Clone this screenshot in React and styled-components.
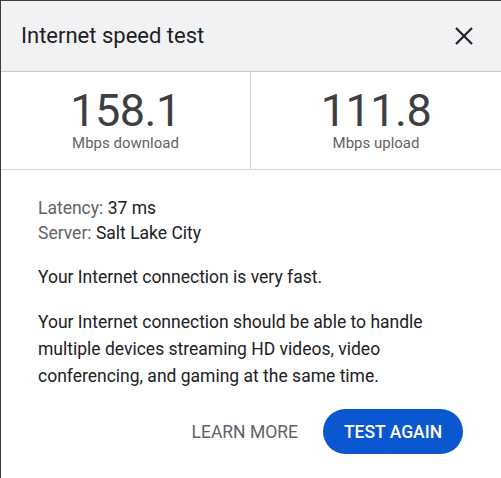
import React from "react";
import styled, { createGlobalStyle } from "styled-components";

const GlobalStyle = createGlobalStyle`
  html, body {
    margin: 0;
    padding: 0;
    background: #ffffff;
  }
  body {
    font-family: Roboto, "Liberation Sans", Arial, sans-serif;
  }
`;

const Dialog = styled.div`
  width: 500px;
  height: 477px;
  border-top: 1px solid #3c3c3c;
  border-left: 1px solid #3c3c3c;
  background: #ffffff;
  display: flex;
  flex-direction: column;
`;

const Header = styled.header`
  height: 71px;
  box-sizing: border-box;
  background: #f1f2f4;
  border-bottom: 1px solid #c9c9c9;
  display: flex;
  align-items: center;
  justify-content: space-between;
  padding: 0 20px;
`;

const Title = styled.h1`
  margin: 0;
  font-size: 22px;
  font-weight: 400;
  color: #202124;
  padding-bottom: 1px;
`;

const CloseButton = styled.button`
  background: none;
  border: none;
  padding: 0;
  width: 30px;
  height: 30px;
  display: flex;
  align-items: center;
  justify-content: center;
  cursor: pointer;
  margin-right: 2px;
`;

const Stats = styled.div`
  display: grid;
  grid-template-columns: 249px 1fr;
  border-bottom: 1px solid #d4d4d4;
  height: 98px;
  box-sizing: border-box;
`;

const Stat = styled.div`
  display: flex;
  flex-direction: column;
  align-items: center;
  justify-content: center;
  border-left: ${(p) => (p.divided ? "1px solid #d4d4d4" : "none")};
  padding-bottom: 2px;
`;

const Value = styled.div`
  font-size: 45px;
  line-height: 46px;
  color: #3c4043;
  letter-spacing: -0.5px;
`;

const Unit = styled.div`
  font-size: 15px;
  line-height: 18px;
  color: #5f6368;
`;

const Body = styled.div`
  padding: 26px 37px 0 37px;
  display: flex;
  flex-direction: column;
  color: #202124;
  font-size: 17.5px;
`;

const Meta = styled.div`
  line-height: 25px;
`;

const Label = styled.span`
  color: #5f6368;
`;

const Text = styled.p`
  margin: ${(p) => p.mt || 0}px 0 0 0;
  line-height: 27px;
`;

const Actions = styled.div`
  display: flex;
  justify-content: flex-end;
  align-items: center;
  gap: 25px;
  margin-top: 19px;
  padding-right: 1px;
`;

const TextButton = styled.button`
  background: none;
  border: none;
  font-family: inherit;
  font-size: 17.5px;
  color: #5f6368;
  padding: 0;
  text-transform: uppercase;
  cursor: pointer;
`;

const PillButton = styled.button`
  background: #0b57d0;
  border: none;
  border-radius: 23px;
  height: 45px;
  width: 140px;
  font-family: inherit;
  font-size: 17.5px;
  font-weight: 500;
  color: #ffffff;
  text-transform: uppercase;
  cursor: pointer;
`;

const App = () => {
  return (
    <>
      <GlobalStyle />
      <Dialog>
        <Header>
          <Title>Internet speed test</Title>
          <CloseButton aria-label="Close">
            <svg width="20" height="20" viewBox="0 0 20 20">
              <path d="M2 2 L18 18 M18 2 L2 18" stroke="#202124" strokeWidth="2.2" />
            </svg>
          </CloseButton>
        </Header>

        <Stats>
          <Stat>
            <Value>158.1</Value>
            <Unit>Mbps download</Unit>
          </Stat>
          <Stat divided>
            <Value>111.8</Value>
            <Unit>Mbps upload</Unit>
          </Stat>
        </Stats>

        <Body>
          <Meta>
            <Label>Latency:</Label> 37 ms
          </Meta>
          <Meta>
            <Label>Server:</Label> Salt Lake City
          </Meta>
          <Text mt={18}>Your Internet connection is very fast.</Text>
          <Text mt={18}>
            Your Internet connection should be able to handle multiple devices
            streaming HD videos, video conferencing, and gaming at the same time.
          </Text>
          <Actions>
            <TextButton>Learn more</TextButton>
            <PillButton>Test again</PillButton>
          </Actions>
        </Body>
      </Dialog>
    </>
  );
};

export default App;
